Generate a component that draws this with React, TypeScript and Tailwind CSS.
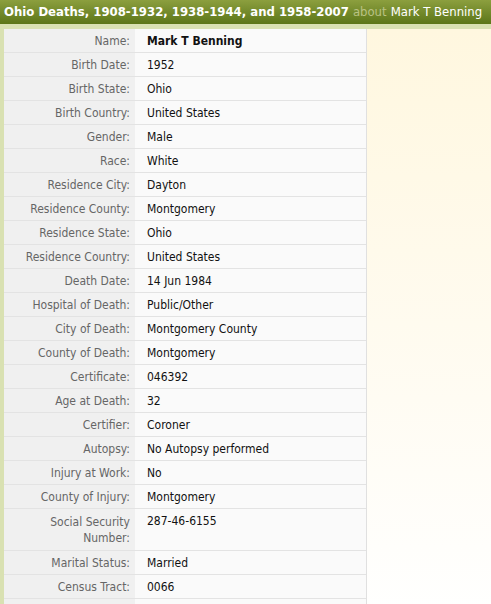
const rows: [string, string][] = [
  ["Name:", "Mark T Benning"],
  ["Birth Date:", "1952"],
  ["Birth State:", "Ohio"],
  ["Birth Country:", "United States"],
  ["Gender:", "Male"],
  ["Race:", "White"],
  ["Residence City:", "Dayton"],
  ["Residence County:", "Montgomery"],
  ["Residence State:", "Ohio"],
  ["Residence Country:", "United States"],
  ["Death Date:", "14 Jun 1984"],
  ["Hospital of Death:", "Public/Other"],
  ["City of Death:", "Montgomery County"],
  ["County of Death:", "Montgomery"],
  ["Certificate:", "046392"],
  ["Age at Death:", "32"],
  ["Certifier:", "Coroner"],
  ["Autopsy:", "No Autopsy performed"],
  ["Injury at Work:", "No"],
  ["County of Injury:", "Montgomery"],
  ["Social Security Number:", "287-46-6155"],
  ["Marital Status:", "Married"],
  ["Census Tract:", "0066"],
  ["", ""],
];

export default function App() {
  return (
    <div className="w-[491px] h-[604px] overflow-hidden bg-white font-['DejaVu_Sans_Condensed','DejaVu_Sans',sans-serif]">
      {/* title bar */}
      <div className="h-[24px] flex items-center px-[4px] bg-gradient-to-b from-[#8c9f3e] to-[#5c7618] text-[13px] whitespace-nowrap">
        <span className="font-bold text-white">Ohio Deaths, 1908-1932, 1938-1944, and 1958-2007</span>
        <span className="ml-[4px] text-[#b9c283]">about</span>
        <span className="ml-[4px] text-white">Mark T Benning</span>
      </div>

      <div className="flex bg-[#d9e1b2] pl-[4px] pt-[5px]">
        <div className="w-[363px] shrink-0 bg-[#fafafa] border-r border-[#e0e0e0] text-[12px]">
          {rows.map(([label, value], i) => {
            const ssn = label === "Social Security Number:";
            return (
              <div key={i} className="flex border-b border-[#e3e3e3]">
                <div
                  className={`w-[131px] shrink-0 bg-[#f0f0f0] text-right text-[#666] pr-[5px] pt-[5px] pb-[3px] min-h-[23px] ${
                    ssn ? "leading-[16px] pb-[4px]" : "leading-[15px]"
                  }`}
                >
                  {ssn ? (
                    <>
                      Social Security
                      <br />
                      Number:
                    </>
                  ) : (
                    label
                  )}
                </div>
                <div
                  className={`pl-[12px] pt-[5px] pb-[3px] leading-[15px] text-[#111] ${
                    i === 0 ? "font-bold" : ""
                  }`}
                >
                  {value}
                </div>
              </div>
            );
          })}
        </div>
        <div className="flex-1 bg-gradient-to-b from-[#fff7df] to-white" />
      </div>
    </div>
  );
}
